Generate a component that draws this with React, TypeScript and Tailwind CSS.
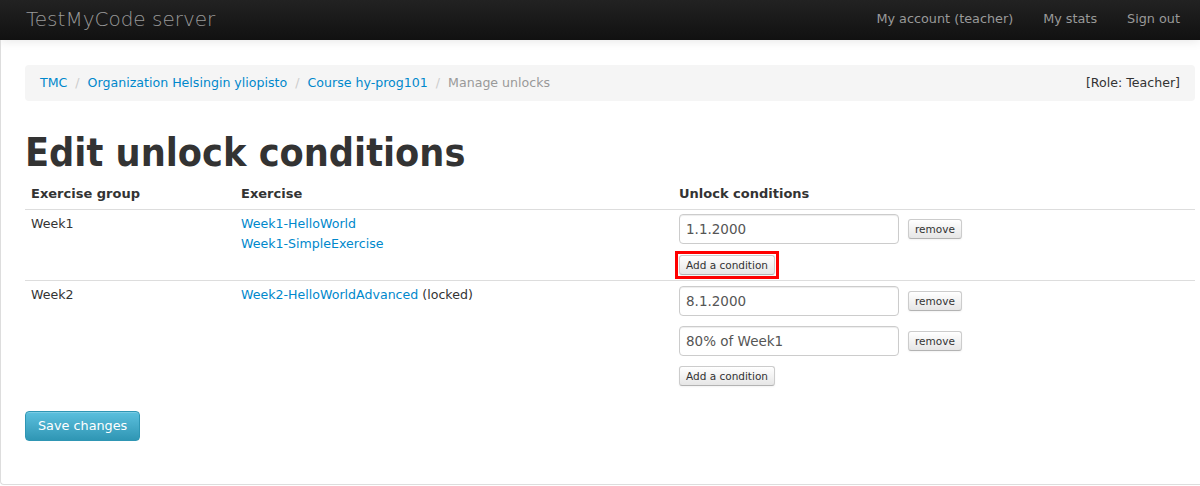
import React from "react";

const font = { fontFamily: '"DejaVu Sans", sans-serif' };

function MiniButton({ label }: { label: string }) {
  return (
    <button className="h-5 rounded-[3px] border border-[#ccc] border-b-[#b3b3b3] bg-gradient-to-b from-white to-[#e6e6e6] px-[6px] text-[10.5px] leading-[18px] text-[#333] shadow-[inset_0_1px_0_rgba(255,255,255,0.2),0_1px_2px_rgba(0,0,0,0.05)]">
      {label}
    </button>
  );
}

function ConditionInput({ value }: { value: string }) {
  return (
    <div className="flex items-center gap-[9px]">
      <input
        readOnly
        value={value}
        className="h-[30px] w-[220px] rounded-[4px] border border-[#ccc] bg-white px-[6px] text-[13.5px] text-[#555] shadow-[inset_0_1px_1px_rgba(0,0,0,0.075)] outline-none"
      />
      <MiniButton label="remove" />
    </div>
  );
}

export default function App() {
  return (
    <div className="min-h-[486px] bg-white text-[12.6px] text-[#333]" style={font}>
      {/* Navbar */}
      <div className="flex h-10 items-center justify-between bg-gradient-to-b from-[#222] to-[#111] pb-[2px] pl-[26px] pr-[20px] shadow-[0_1px_10px_rgba(0,0,0,0.1)]">
        <span className="text-[20px] font-extralight text-[#999]">TestMyCode server</span>
        <div className="flex gap-[30px] text-[12.8px] text-[#999]">
          <span>My account (teacher)</span>
          <span>My stats</span>
          <span>Sign out</span>
        </div>
      </div>

      {/* Main container */}
      <div className="h-[445px] rounded-bl-[4px] border-b border-l border-[#ddd] pl-6 pr-[5px] pt-[25px]">
        {/* Breadcrumb */}
        <div className="flex h-[36px] items-center justify-between rounded-[4px] bg-[#f5f5f5] px-[15px]">
          <div className="flex items-center">
            <a className="text-[#0088cc]">TMC</a>
            <span className="px-[8px] text-[#ccc]">/</span>
            <a className="text-[#0088cc]">Organization Helsingin yliopisto</a>
            <span className="px-[8px] text-[#ccc]">/</span>
            <a className="text-[#0088cc]">Course hy-prog101</a>
            <span className="px-[8px] text-[#ccc]">/</span>
            <span className="text-[#999]">Manage unlocks</span>
          </div>
          <span>[Role: Teacher]</span>
        </div>

        <h1 className="mt-[32px] text-[39.2px] font-bold leading-[40px] text-[#333] font-stretch-condensed">
          Edit unlock conditions
        </h1>

        <table className="mt-[7px] w-full border-collapse text-left">
          <thead>
            <tr className="border-b border-[#ddd]">
              <th className="w-[210px] px-[6px] pb-[5px] pt-[4px] text-[13px] font-bold">Exercise group</th>
              <th className="w-[438px] px-[6px] pb-[5px] pt-[4px] text-[13px] font-bold">Exercise</th>
              <th className="px-[6px] pb-[5px] pt-[4px] text-[13px] font-bold">Unlock conditions</th>
            </tr>
          </thead>
          <tbody>
            <tr className="border-b border-[#ddd] align-top">
              <td className="px-[6px] pt-[4px] leading-[20px]">Week1</td>
              <td className="px-[6px] pt-[4px] leading-[20px]">
                <a className="block text-[#0088cc]">Week1-HelloWorld</a>
                <a className="block text-[#0088cc]">Week1-SimpleExercise</a>
              </td>
              <td className="px-[6px] pb-[5px] pt-[4px]">
                <ConditionInput value="1.1.2000" />
                <div className="mt-[11px] flex">
                  {/* highlighted button */}
                  <span className="-m-[4px] inline-flex border-[3px] border-[#f00] p-[1px]">
                    <MiniButton label="Add a condition" />
                  </span>
                </div>
              </td>
            </tr>
            <tr className="align-top">
              <td className="px-[6px] pt-[4px] leading-[20px]">Week2</td>
              <td className="px-[6px] pt-[4px] leading-[20px]">
                <a className="text-[#0088cc]">Week2-HelloWorldAdvanced</a> (locked)
              </td>
              <td className="px-[6px] pt-[5px]">
                <div className="flex flex-col gap-[10px]">
                  <ConditionInput value="8.1.2000" />
                  <ConditionInput value="80% of Week1" />
                </div>
                <div className="mt-[10px] flex">
                  <MiniButton label="Add a condition" />
                </div>
              </td>
            </tr>
          </tbody>
        </table>

        <button className="mt-[25px] h-[30px] rounded-[4px] border border-[#2f96b4] bg-gradient-to-b from-[#5bc0de] to-[#2f96b4] px-[12px] text-[12.8px] text-white shadow-[inset_0_1px_0_rgba(255,255,255,0.2)]">
          Save changes
        </button>
      </div>
    </div>
  );
}
